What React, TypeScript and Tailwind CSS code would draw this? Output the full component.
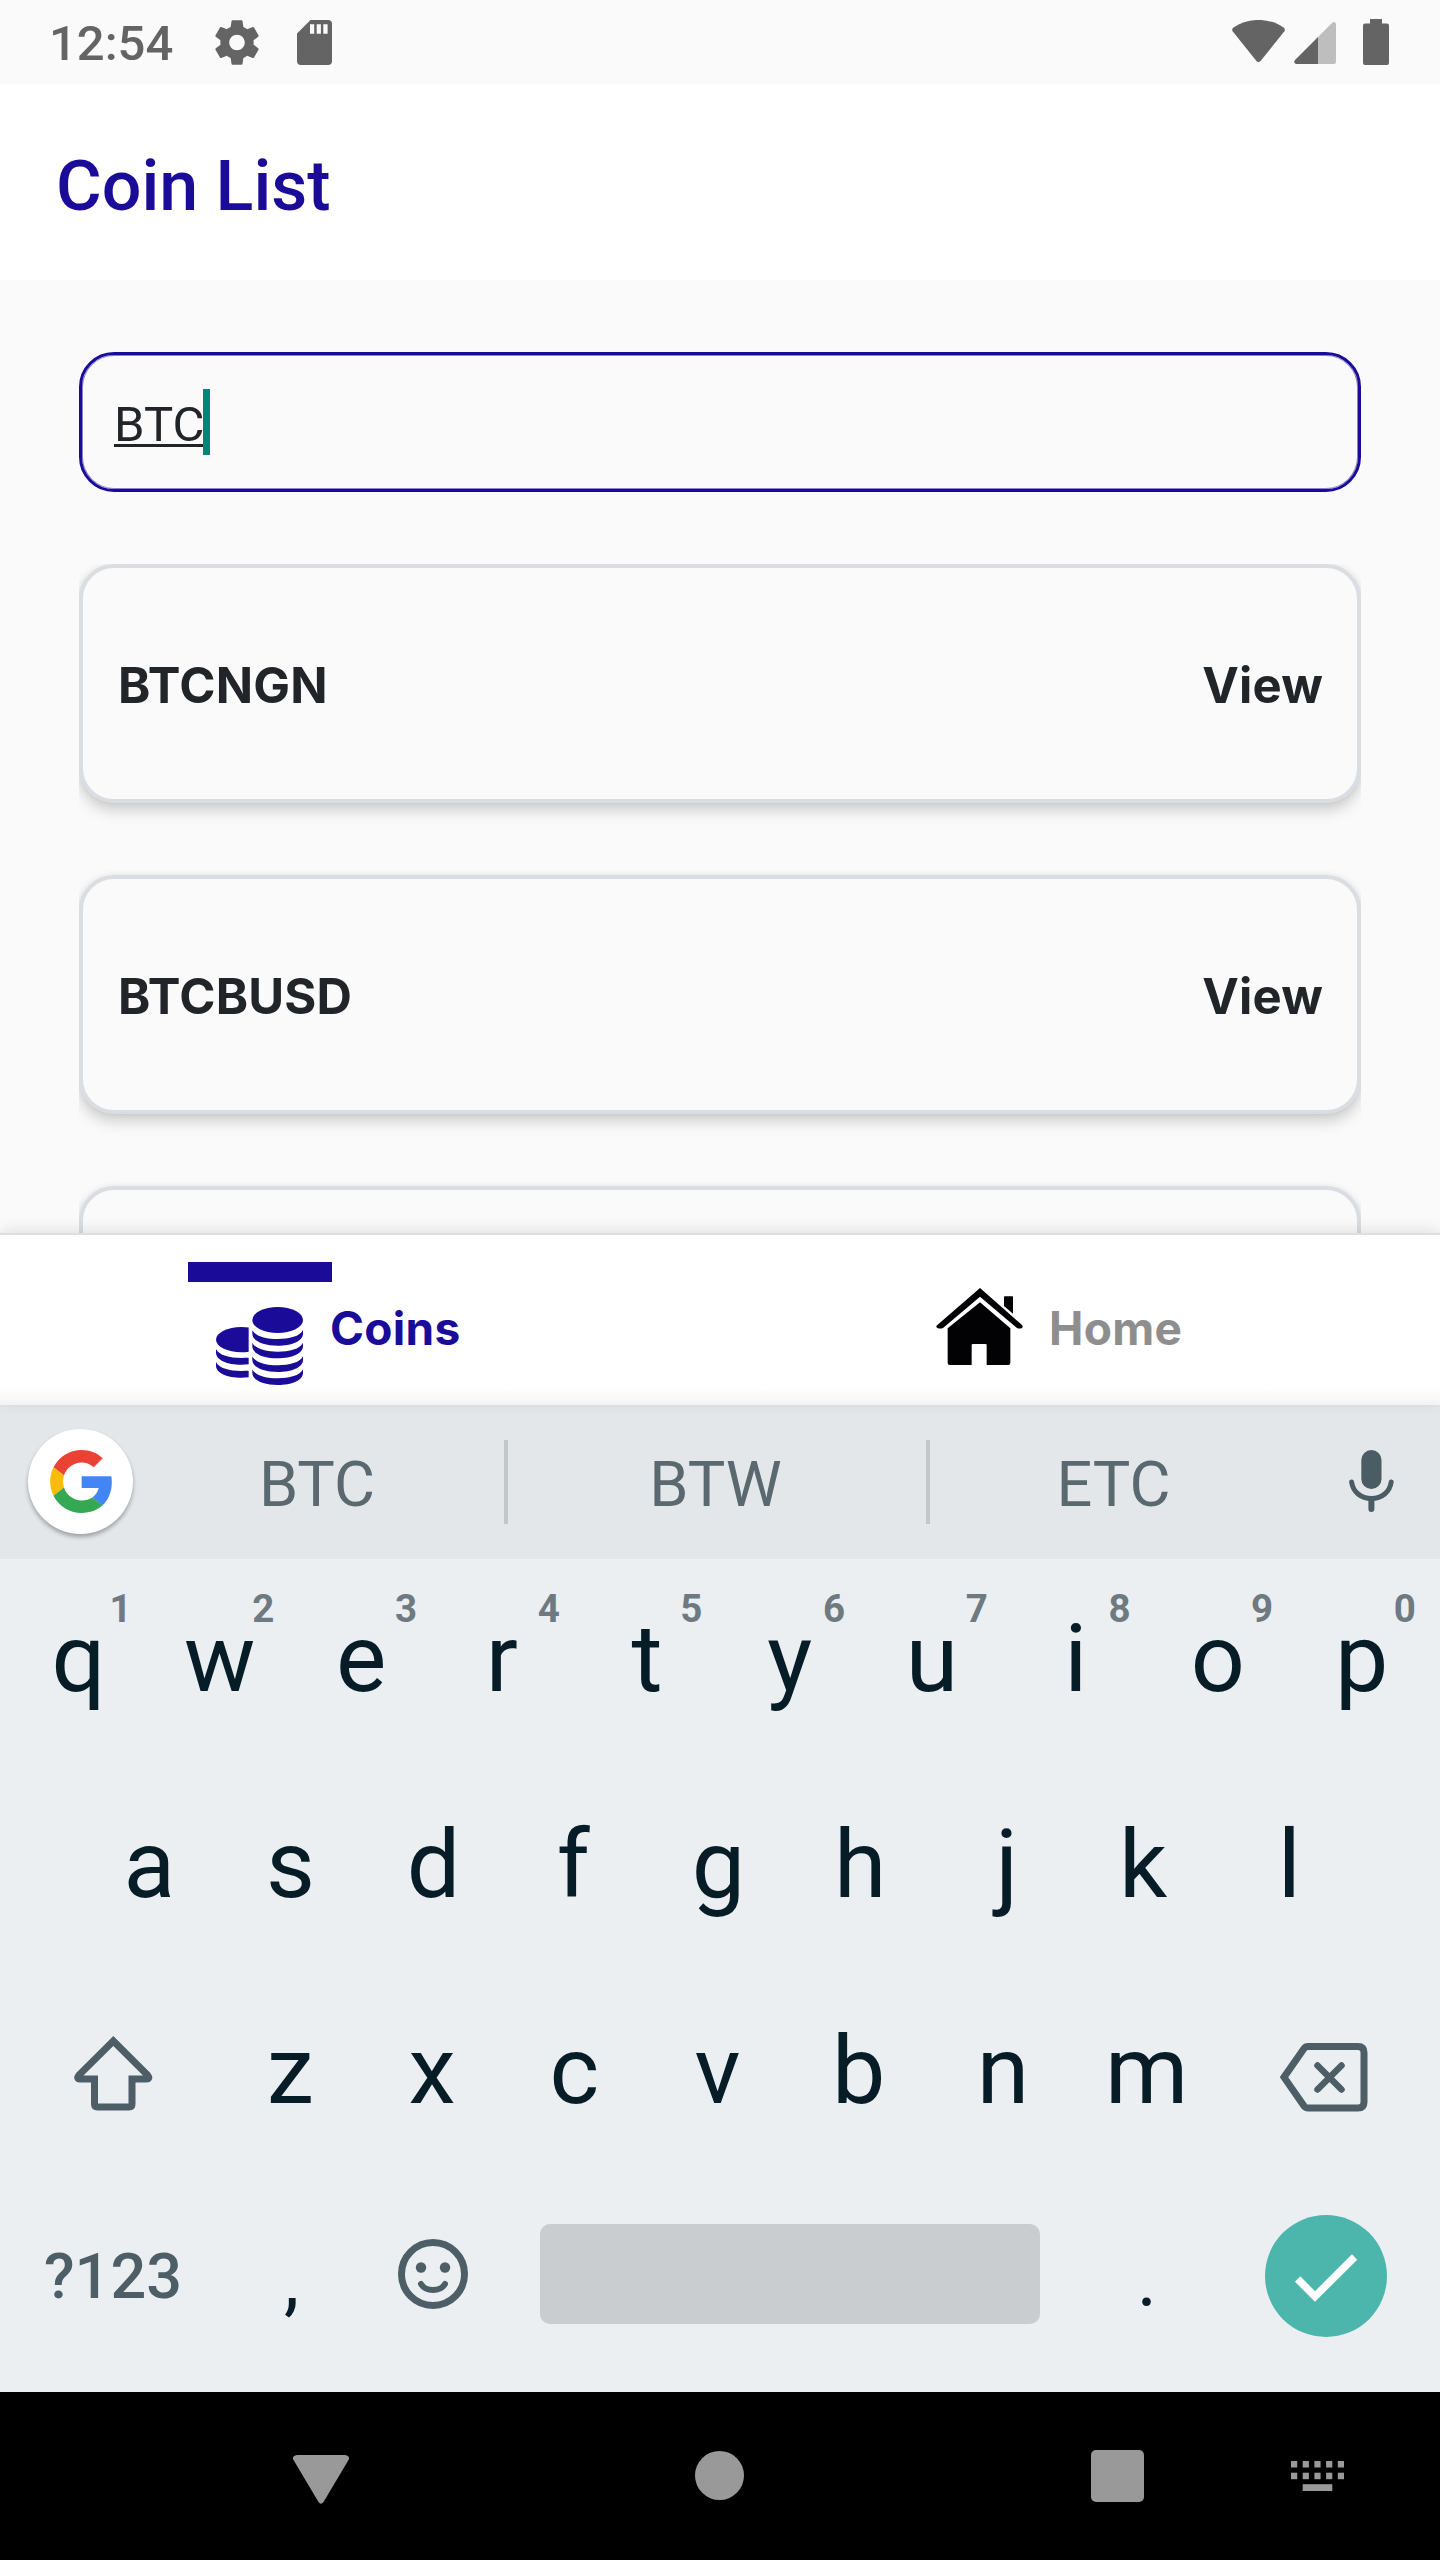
import React from "react";

const topRow: [string, string][] = [
  ["q", "1"], ["w", "2"], ["e", "3"], ["r", "4"], ["t", "5"],
  ["y", "6"], ["u", "7"], ["i", "8"], ["o", "9"], ["p", "0"],
];
const middleRow = ["a", "s", "d", "f", "g", "h", "j", "k", "l"];
const bottomRow = ["z", "x", "c", "v", "b", "n", "m"];

// Optical centring of each glyph inside its key
const glyphPadding: Record<string, string> = {
  q: "pl-[1px]", w: "pr-[2px]", e: "pr-[4px]", r: "pr-[8px]", t: "pr-[3px]",
  y: "pr-[3px]", u: "pr-[4px]", i: "pr-[2px]", o: "pr-[3px]", p: "pr-[1px]",
  s: "pr-[3px]", d: "pr-[2px]", f: "pr-[8px]", g: "pr-[3px]", h: "pr-[5px]",
  j: "pl-[3px]", k: "pr-[10px]", l: "pr-[3px]", z: "pr-[3px]", x: "pr-[5px]",
  c: "pr-[6px]", v: "pr-[5px]", b: "pr-[8px]", n: "pr-[5px]", m: "pr-[3px]",
};

function StatusBar() {
  return (
    <div className="flex h-[84px] shrink-0 items-start bg-[#fafafa] pl-[49px] text-[#646464]">
      <span className="mt-[4px] w-[166px] text-[49px] leading-[80px] font-medium">12:54</span>
      <svg className="mt-[20px] h-[45px] w-[44px]" viewBox="2.1 2 19.8 20" fill="currentColor">
        <path d="M19.43 12.98c.04-.32.07-.64.07-.98s-.03-.66-.07-.98l2.11-1.65c.19-.15.24-.42.12-.64l-2-3.46c-.12-.22-.39-.3-.61-.22l-2.49 1c-.52-.4-1.08-.73-1.69-.98l-.38-2.65C14.46 2.18 14.25 2 14 2h-4c-.25 0-.46.18-.49.42l-.38 2.65c-.61.25-1.17.59-1.69.98l-2.49-1c-.23-.09-.49 0-.61.22l-2 3.46c-.13.22-.07.49.12.64l2.11 1.65c-.04.32-.07.65-.07.98s.03.66.07.98l-2.11 1.65c-.19.15-.24.42-.12.64l2 3.46c.12.22.39.3.61.22l2.49-1c.52.4 1.08.73 1.69.98l.38 2.65c.03.24.24.42.49.42h4c.25 0 .46-.18.49-.42l.38-2.65c.61-.25 1.17-.59 1.69-.98l2.49 1c.23.09.49 0 .61-.22l2-3.46c.12-.22.07-.49-.12-.64l-2.11-1.65zM12 15.5c-1.93 0-3.5-1.57-3.5-3.5s1.57-3.5 3.5-3.5 3.5 1.57 3.5 3.5-1.57 3.5-3.5 3.5z" />
      </svg>
      <svg className="mt-[20px] ml-[38px] h-[45px] w-[35px]" viewBox="0 0 35 45" fill="currentColor">
        <path fillRule="evenodd" d="M13.5 0H31Q35 0 35 4V41Q35 45 31 45H4Q0 45 0 41V13.5ZM13 4.3V13.7H17.2V4.3ZM19.7 4.3V13.7H23.9V4.3ZM26.3 4.3V13.7H30.6V4.3Z" />
      </svg>
      <svg className="mt-[20px] ml-auto h-[42px] w-[53px]" viewBox="0 0 53 42" fill="currentColor">
        <path d="M.6 11.2Q-.6 9 1.5 7.5C16-2.6 37-2.6 51.5 7.5Q53.6 9 52.4 11.2L28.6 41Q26.5 43 24.4 41Z" />
      </svg>
      <svg className="mt-[22px] ml-[9px] h-[42px] w-[42px]" viewBox="0 0 42 42" fill="currentColor">
        <path d="M24 15L38 1Q41-1.2 42 2V40Q42 42 40 42H24Z" fill="#bebebe" />
        <path d="M24 15V42H2Q-1.2 41 1 38Z" />
      </svg>
      <svg className="mt-[19px] mr-[51px] ml-[27px] h-[46px] w-[26px]" viewBox="0 0 26 46" fill="currentColor">
        <path d="M7 0H19V4.5H24Q26 4.5 26 6.5V44Q26 46 24 46H2Q0 46 0 44V6.5Q0 4.5 2 4.5H7Z" />
      </svg>
    </div>
  );
}

function CoinCard({ name }: { name?: string }) {
  return (
    <div className="flex h-[239px] shrink-0 items-center justify-between rounded-[35px] border-[4px] border-[#dadde1] bg-[#fafafa] pt-[5px] pr-[34px] pl-[35px] font-['Inter',sans-serif] text-[49px] font-bold tracking-[0.2px] text-[#212529] shadow-[0_8px_14px_rgba(0,0,0,0.17),0_0_6px_rgba(0,0,0,0.07)]">
      {name && (
        <>
          <span>{name}</span>
          <span>View</span>
        </>
      )}
    </div>
  );
}

function CoinsIcon() {
  const crescent = "M109-47C118-28 150-20 185-20S252-28 261-47V-36C261-14 227 0 185 0S109-14 109-36Z";
  return (
    <svg className="h-[78px] w-[87px]" viewBox="0 0 261 234" fill="#1a0b99">
      <defs>
        <clipPath id="backStack">
          <rect x="0" y="0" width="98" height="234" />
        </clipPath>
      </defs>
      <ellipse cx="185" cy="39" rx="76" ry="39" />
      {[116, 154, 195, 234].map((y) => (
        <path key={y} d={crescent} transform={`translate(0 ${y})`} />
      ))}
      <g clipPath="url(#backStack)">
        <ellipse cx="76" cy="98" rx="76" ry="38" />
        {[173, 212].map((y) => (
          <path key={y} d={crescent} transform={`translate(-109 ${y})`} />
        ))}
      </g>
    </svg>
  );
}

function HomeIcon() {
  return (
    <svg className="h-[78px] w-[87px]" viewBox="0 0 261 234" fill="#020103">
      <path d="M132 0L258 111Q262 116 258 120Q250 124 242 119L132 26L22 119Q14 124 4 120Q-2 116 4 111Z" />
      <path d="M132 43L223 121V225Q223 231 217 231H152V171Q152 168 149 168H110Q107 168 107 171V231H41Q35 231 35 225V121Z" />
      <path d="M204 27Q204 25 206 25H229Q231 25 231 27V77L204 54Z" />
    </svg>
  );
}

function TabBar() {
  return (
    <div className="relative z-10 flex h-[172px] shrink-0 border-t-[2px] border-[#dedede] bg-gradient-to-b from-white from-[90%] to-[#f3f3f3] font-['Inter',sans-serif] text-[46px] font-bold tracking-[0.3px] shadow-[0_-3px_14px_rgba(0,0,0,0.1)]">
      <div className="flex w-[720px] items-start pl-[188px]">
        <div className="w-[144px] pt-[27px]">
          <div className="mb-[25px] h-[20px] bg-[#1a0b99]" />
          <div className="pl-[28px]">
            <CoinsIcon />
          </div>
        </div>
        <span className="mt-[63px] -ml-[2px] leading-[60px] text-[#1a0b99]">Coins</span>
      </div>
      <div className="flex items-start pl-[216px]">
        <div className="pt-[53px]">
          <HomeIcon />
        </div>
        <span className="mt-[63px] ml-[26px] leading-[60px] text-[#8e8e8e]">Home</span>
      </div>
    </div>
  );
}

function GoogleLogo() {
  return (
    <svg className="h-[63px] w-[62px]" viewBox="0 0 47 48">
      <path fill="#ea4335" d="M24 9.5c3.54 0 6.71 1.22 9.21 3.6l6.85-6.85C35.9 2.38 30.47 0 24 0 14.62 0 6.51 5.38 2.56 13.22l7.98 6.19C12.43 13.72 17.74 9.5 24 9.5z" />
      <path fill="#4285f4" d="M46.98 24.55c0-1.57-.15-3.09-.38-4.55H24v9.02h12.94c-.58 2.96-2.26 5.48-4.78 7.18l7.73 6c4.51-4.18 7.09-10.36 7.09-17.65z" />
      <path fill="#fbbc05" d="M10.53 28.59c-.48-1.45-.76-2.99-.76-4.59s.27-3.14.76-4.59l-7.98-6.19C.92 16.46 0 20.12 0 24c0 3.88.92 7.54 2.56 10.78l7.97-6.19z" />
      <path fill="#34a853" d="M24 48c6.48 0 11.93-2.13 15.89-5.81l-7.73-6c-2.15 1.45-4.92 2.3-8.16 2.3-6.26 0-11.57-4.22-13.47-9.91l-7.98 6.19C6.51 42.62 14.62 48 24 48z" />
    </svg>
  );
}

function SuggestionBar() {
  return (
    <div className="flex h-[154px] shrink-0 items-start bg-[#e3e7ea] pl-[28px] text-[63px] text-[#5a6970]">
      <div className="mt-[24px] flex size-[105px] items-center justify-center rounded-full bg-white shadow-[0_3px_4px_rgba(0,0,0,0.3)]">
        <GoogleLogo />
      </div>
      <span className="w-[371px] pr-[3px] text-center leading-[160px]">BTC</span>
      <div className="mt-[35px] h-[84px] w-[4px] bg-[#c2c7ca]" />
      <span className="w-[416px] pr-[1px] text-center leading-[160px]">BTW</span>
      <div className="mt-[35px] ml-[2px] h-[84px] w-[4px] bg-[#c2c7ca]" />
      <span className="w-[368px] pr-[1px] text-center leading-[160px]">ETC</span>
      <svg className="mt-[45px] ml-[51px] h-[62px] w-[45px]" viewBox="0 0 45 62" fill="none" stroke="#4a5c64" strokeLinecap="round">
        <rect x="12.3" y="0" width="20.2" height="39" rx="10" fill="#4a5c64" stroke="none" />
        <path d="M2.6 32C4 42 12 48.5 22.4 48.5S40.8 42 42.2 32" strokeWidth="5" />
        <path d="M22.4 49V59" strokeWidth="6" />
      </svg>
    </div>
  );
}

function LetterKey({ letter, hint }: { letter: string; hint?: string }) {
  return (
    <div className={`relative w-[142.7px] text-center text-[95px] leading-[199px] text-[#061d27] ${glyphPadding[letter] ?? ""}`}>
      {letter}
      {hint && (
        <span className="absolute top-[27px] left-[103px] text-[38.5px] leading-[46px] font-bold text-[#6e7a80]">{hint}</span>
      )}
    </div>
  );
}

function Keyboard() {
  return (
    <div className="flex h-[833px] shrink-0 flex-col bg-[#ebeff2]">
      <div className="flex h-[206px] justify-center">
        {topRow.map(([letter, hint]) => (
          <LetterKey key={letter} letter={letter} hint={hint} />
        ))}
      </div>
      <div className="flex h-[206px] justify-center">
        {middleRow.map((letter) => (
          <LetterKey key={letter} letter={letter} />
        ))}
      </div>
      <div className="flex h-[206px] justify-center">
        <div className="w-[214px] pt-[65px] pl-[67px]">
          <svg className="h-[75px] w-[79px]" viewBox="0 0 79 75" fill="none" stroke="#4d5e66" strokeWidth="7">
            <path d="M39.3 5L5 39Q2 43 6 43H20.5V68Q20.5 71 23.5 71H55Q58 71 58 68V43H72.5Q76.5 43 73.5 39Z" />
          </svg>
        </div>
        {bottomRow.map((letter) => (
          <LetterKey key={letter} letter={letter} />
        ))}
        <div className="w-[214px] pt-[71px] pl-[61px]">
          <svg className="h-[70px] w-[88px]" viewBox="0 0 88 70" fill="none" stroke="#4d5e66" strokeWidth="7">
            <path d="M28 4.5H78Q84 4.5 84 10.5V60Q84 66 78 66H28Q25.5 66 24 64L4 35.2L24 6.5Q25.5 4.5 28 4.5Z" />
            <path d="M37.5 23.5L61.5 47.5M61.5 23.5L37.5 47.5" strokeWidth="6.5" strokeLinecap="round" />
          </svg>
        </div>
      </div>
      <div className="flex h-[215px] px-[6px]">
        <span className="w-[214px] text-center text-[63px] leading-[199px] font-medium text-[#4d5e66]">?123</span>
        <span className="w-[143px] text-center text-[77px] leading-[207px] text-[#061d27]">,</span>
        <div className="w-[143px] pt-[62px] pl-[35px]">
          <svg className="size-[70px]" viewBox="0 0 70 70" fill="none" stroke="#4d5e66">
            <circle cx="35" cy="35" r="31.5" strokeWidth="7" />
            <circle cx="23" cy="28.5" r="5.2" fill="#4d5e66" stroke="none" />
            <circle cx="47" cy="28.5" r="5.2" fill="#4d5e66" stroke="none" />
            <path d="M23 45C28 53 42 53 47 45" strokeWidth="6" strokeLinecap="round" />
          </svg>
        </div>
        <div className="mx-[34px] mt-[47px] h-[100px] w-[500px] rounded-[10px] bg-[#c9cdd0]" />
        <span className="w-[145px] pl-[1px] text-center text-[77px] leading-[207px] text-[#061d27]">.</span>
        <div className="pt-[38px] pl-[45.5px]">
          <svg className="size-[122px]" viewBox="0 0 122 122" fill="none">
            <circle cx="61" cy="61" r="61" fill="#4db6ac" />
            <path d="M32.6 64L50 81.5L89.6 42" stroke="#ffffff" strokeWidth="7.5" />
          </svg>
        </div>
      </div>
    </div>
  );
}

function NavigationBar() {
  return (
    <div className="flex h-[168px] shrink-0 items-start bg-black pl-[293px]">
      <svg className="mt-[63px] h-[49px] w-[56px]" viewBox="0 0 56 49" fill="#999999">
        <path d="M4 0H52Q57.5 1 55.5 5L30.5 47Q28 50.5 25.5 47L.5 5Q-1.5 1 4 0Z" />
      </svg>
      <div className="mt-[59px] ml-[346px] size-[49px] rounded-full bg-[#999999]" />
      <div className="mt-[58px] ml-[347px] h-[52px] w-[53px] rounded-[5px] bg-[#999999]" />
      <svg className="mt-[69px] ml-[147px] h-[30px] w-[53px]" viewBox="0 0 53 30" fill="#999999">
        {[0, 11.7, 23.4, 35.1, 46.8].map((x) => (
          <g key={x}>
            <rect x={x} y="0" width="6.2" height="6.5" />
            <rect x={x} y="11.7" width="6.2" height="6.5" />
          </g>
        ))}
        <rect x="11.7" y="23.2" width="29.6" height="6.8" />
      </svg>
    </div>
  );
}

export default function App() {
  return (
    <div className="flex h-[2560px] w-[1440px] flex-col overflow-hidden bg-[#fafafa] font-['Roboto',sans-serif]">
      <StatusBar />
      <header className="flex h-[196px] shrink-0 items-center bg-white px-[56px] pt-[8px]">
        <h1 className="text-[70px] font-medium text-[#1a0b99]">Coin List</h1>
      </header>
      <main className="flex h-[953px] shrink-0 flex-col px-[79px] pt-[72px]">
        <div className="flex h-[140px] shrink-0 items-start rounded-[35px] border-[3px] border-[#1a0b99] pl-[32px] shadow-[inset_0_0_0_1px_rgba(26,11,153,0.5)]">
          <span className="mt-[34px] inline-block h-[66px] text-[49px] leading-[71px] text-[#212529] underline decoration-[3px] underline-offset-[3px] [text-decoration-skip-ink:none]">BTC</span>
          <span className="mt-[34px] -ml-[1px] h-[66px] w-[7px] bg-[#008577]" />
        </div>
        <div className="mt-[72px] flex flex-1 flex-col gap-[72px] overflow-hidden">
          <CoinCard name="BTCNGN" />
          <CoinCard name="BTCBUSD" />
          <CoinCard />
        </div>
      </main>
      <TabBar />
      <SuggestionBar />
      <Keyboard />
      <NavigationBar />
    </div>
  );
}
